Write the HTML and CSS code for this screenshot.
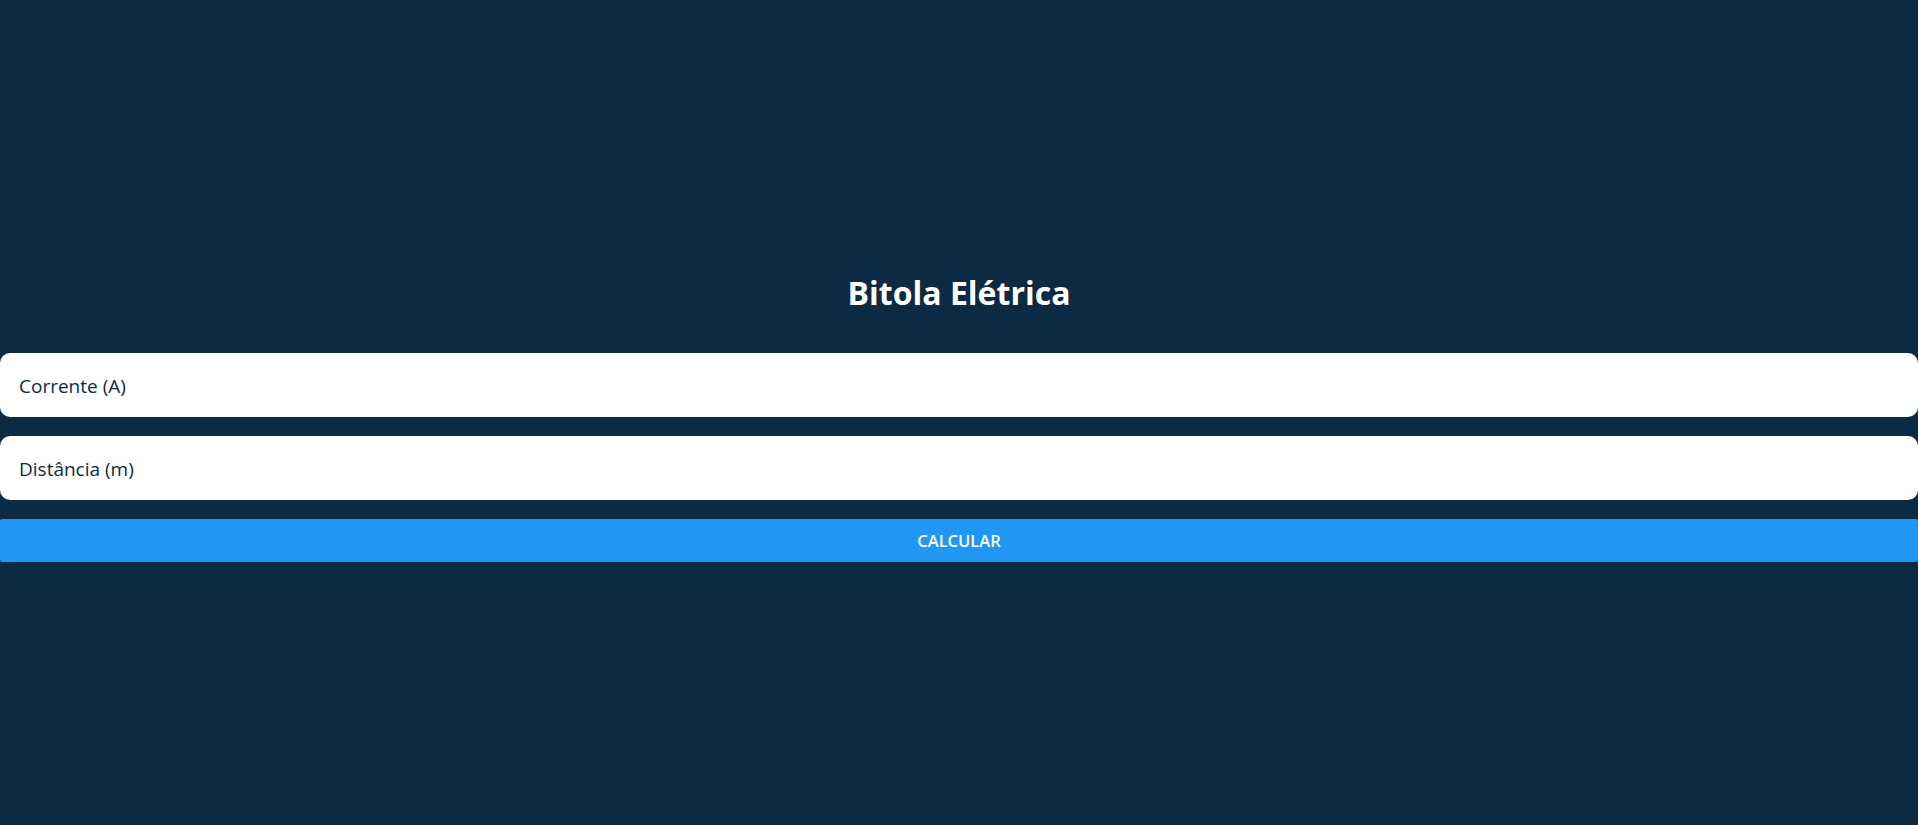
FILE: index.html
```html
<!DOCTYPE html>
<html lang="pt-BR">
<head>
<meta charset="utf-8">
<title>Bitola Elétrica</title>
<link rel="stylesheet" href="styles.css">
</head>
<body>
<main class="page">
  <h1 class="title">Bitola Elétrica</h1>
  <form class="form">
    <input class="field" type="text" placeholder="Corrente (A)">
    <input class="field" type="text" placeholder="Distância (m)">
    <button class="btn" type="button">CALCULAR</button>
  </form>
</main>
</body>
</html>
```
FILE: styles.css
```css
* { box-sizing: border-box; }
html, body { margin: 0; padding: 0; }
body {
  background: #0c2a43;
  font-family: "Open Sans", "Noto Sans", "Liberation Sans", sans-serif;
}
.page {
  min-height: 100vh;
  display: flex;
  flex-direction: column;
  justify-content: center;
  padding-top: 10px;
}
.title {
  margin: 0 0 40px;
  height: 40px;
  line-height: 40px;
  text-align: center;
  color: #ffffff;
  font-size: 32px;
  font-weight: 700;
}
.form {
  display: flex;
  flex-direction: column;
  gap: 19px;
}
.field {
  display: block;
  width: 100%;
  height: 64px;
  border: none;
  border-radius: 10px;
  background: #ffffff;
  padding: 2px 19px 0;
  font-family: inherit;
  font-size: 19px;
  color: #0c2a43;
  outline: none;
}
.field::placeholder { color: #0c2a43; opacity: 1; }
.btn {
  display: block;
  width: 100%;
  height: 43px;
  border: none;
  border-radius: 2px;
  background: #2196f3;
  color: #ffffff;
  font-family: inherit;
  font-size: 16.5px;
  font-weight: 600;
  cursor: pointer;
}
```
